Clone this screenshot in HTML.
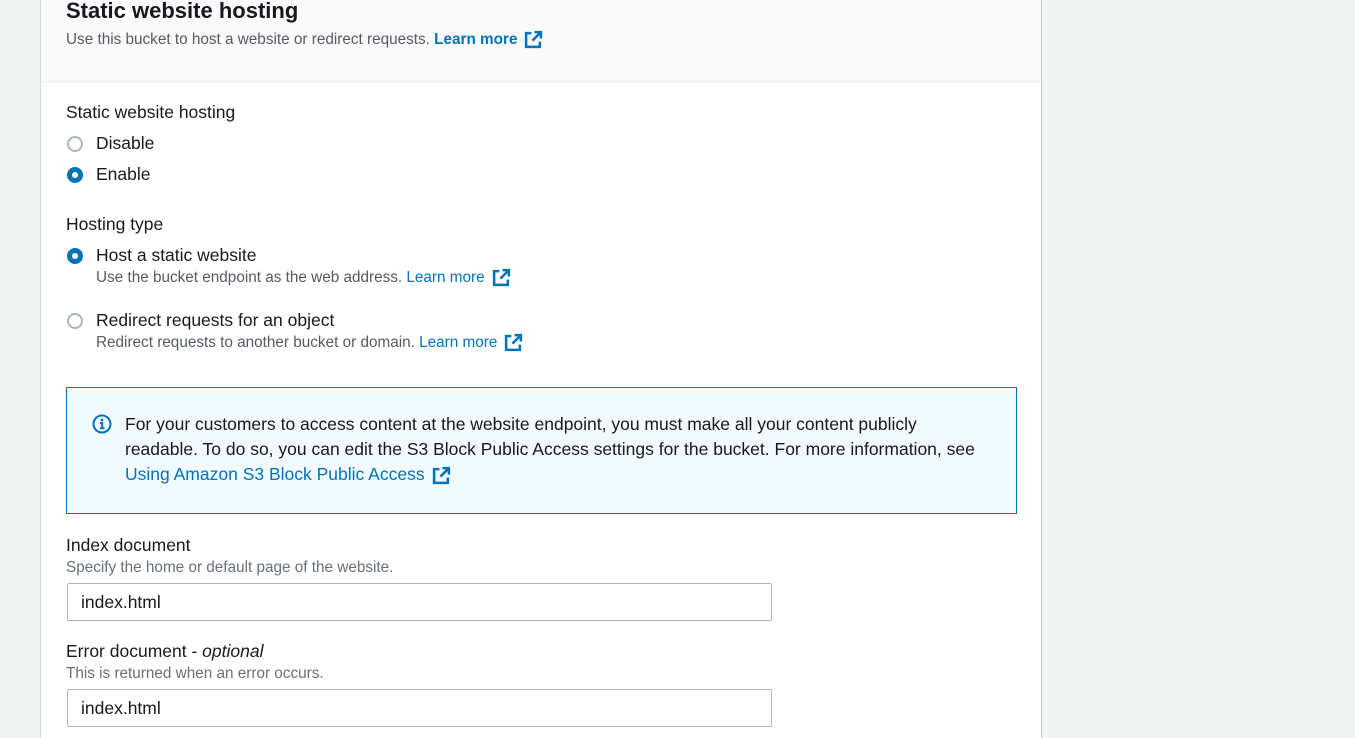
<!DOCTYPE html>
<html><head><style>
body{margin:0;width:1355px;height:733px;background:#f2f3f3;font-family:"Liberation Sans",sans-serif;color:#16191f;overflow:hidden;position:relative}
.panel{position:absolute;left:40px;top:-2px;width:1000px;height:740px;background:#fff;border-left:1px solid #d5dbdb;border-right:1px solid #c4c8c8}
.hdr{position:absolute;left:0;top:0;width:1000px;height:83px;background:#fafafa;border-bottom:1px solid #eaeded}
.a{position:absolute;white-space:nowrap}
.lnk{color:#0073bb}
.r{position:absolute;width:16px;height:16px;border-radius:50%;box-sizing:border-box;border:2px solid #aab7b8;background:#fff}
.r.on{border:5px solid #0073bb}
.ext{display:inline-block;vertical-align:-5px;margin-left:7px}
.inp{position:absolute;left:26px;width:705px;height:38px;border:1px solid #aab7b8;border-radius:2px;box-sizing:border-box;font-size:17.5px;padding:8px 13px}
.l{font-size:17.5px}
.s{font-size:15.3px}
</style></head><body>
<svg width="0" height="0" style="position:absolute"><defs><symbol id="e" viewBox="0 0 18 18"><path d="M10 2h6v6M16 2L8 10M7 3H2v13h13v-5" fill="none" stroke="#0073bb" stroke-width="2.4"/></symbol></defs></svg>
<div class="panel">
<div class="hdr"></div>
<div class="a" style="left:25px;top:0;font-size:22px;font-weight:bold">Static website hosting</div>
<div class="a s" style="left:25px;top:32px;color:#545b64">Use this bucket to host a website or redirect requests. <b class="lnk">Learn more</b><svg class="ext" width="19" height="19"><use href="#e"/></svg></div>

<div class="a l" style="left:25px;top:104px">Static website hosting</div>
<div class="r" style="left:26px;top:138px"></div><div class="a l" style="left:55px;top:135px">Disable</div>
<div class="r on" style="left:26px;top:169px"></div><div class="a l" style="left:55px;top:166px">Enable</div>

<div class="a l" style="left:25px;top:216px">Hosting type</div>
<div class="r on" style="left:26px;top:250px"></div><div class="a l" style="left:55px;top:247px">Host a static website</div>
<div class="a s" style="left:55px;top:270px;color:#545b64">Use the bucket endpoint as the web address. <span class="lnk">Learn more</span><svg class="ext" width="19" height="19"><use href="#e"/></svg></div>
<div class="r" style="left:26px;top:315px"></div><div class="a l" style="left:55px;top:312px">Redirect requests for an object</div>
<div class="a s" style="left:55px;top:335px;color:#545b64">Redirect requests to another bucket or domain. <span class="lnk">Learn more</span><svg class="ext" width="19" height="19"><use href="#e"/></svg></div>

<div style="position:absolute;left:25px;top:389px;width:951px;height:127px;box-sizing:border-box;border:1px solid #0073bb;background:#f1faff"></div>
<svg class="a" style="left:51px;top:416px" width="20" height="20" viewBox="0 0 20 20"><circle cx="10" cy="10" r="8.5" fill="none" stroke="#0073bb" stroke-width="2"/><circle cx="10" cy="6" r="1.4" fill="#0073bb"/><path d="M8 9h2.2v5M8 14.3h4.5" stroke="#0073bb" stroke-width="2" fill="none"/></svg>
<div class="a l" style="left:84px;top:414px;line-height:25px">For your customers to access content at the website endpoint, you must make all your content publicly<br>readable. To do so, you can edit the S3 Block Public Access settings for the bucket. For more information, see<br><span class="lnk">Using Amazon S3 Block Public Access</span><svg class="ext" width="19" height="19"><use href="#e"/></svg></div>

<div class="a l" style="left:25px;top:537px">Index document</div>
<div class="a s" style="left:25px;top:561px;color:#687078">Specify the home or default page of the website.</div>
<div class="inp" style="top:585px">index.html</div>

<div class="a l" style="left:25px;top:643px">Error document - <i>optional</i></div>
<div class="a s" style="left:25px;top:667px;color:#687078">This is returned when an error occurs.</div>
<div class="inp" style="top:691px">index.html</div>
</div>
</body></html>
